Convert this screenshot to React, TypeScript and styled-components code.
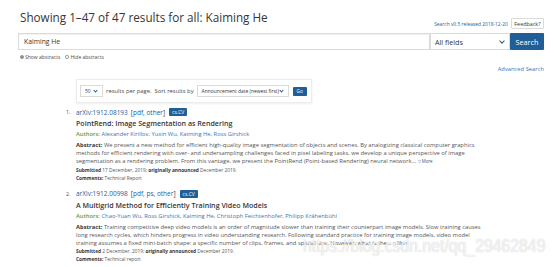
import React from "react"
import styled, { createGlobalStyle } from "styled-components"

const Global = createGlobalStyle`
  body {
    margin: 0;
    background: #fff;
    font-family: "Open Sans", "Liberation Sans", sans-serif;
    color: #363636;
  }
`

const Page = styled.div`
  position: relative;
  width: 554px;
  height: 267px;
  overflow: hidden;
  padding: 0 10px 0 18px;
  box-sizing: border-box;
`

const Header = styled.div`
  display: flex;
  justify-content: space-between;
  align-items: flex-end;
  height: 30px;
`

const Title = styled.h1`
  margin: 0 0 6px 2px;
  font-size: 11.7px;
  font-weight: 400;
  line-height: 14px;
  color: #363636;
  white-space: nowrap;
`

const Release = styled.div`
  display: flex;
  align-items: center;
  gap: 3px;
  margin-bottom: 1px;
  font-size: 4.9px;
  color: #1f5e96;
  white-space: nowrap;
`

const Feedback = styled.span`
  height: 11px;
  box-sizing: border-box;
  display: flex;
  align-items: center;
  border: 1px solid #dbdbdb;
  border-radius: 1px;
  padding: 0 2.5px;
  color: #363636;
  font-size: 5.4px;
`

const SearchRow = styled.div`
  display: flex;
  height: 17px;
  margin-top: 3px;
`

const Input = styled.div`
  flex: 1;
  border: 1px solid #dbdbdb;
  box-shadow: inset 0 1px 1px rgba(10, 10, 10, 0.06);
  display: flex;
  align-items: center;
  padding-left: 5px;
  font-size: 6.8px;
  color: #363636;
`

const Select = styled.div<{ $w: number; $size: number }>`
  width: ${(p) => p.$w}px;
  box-sizing: border-box;
  border: 1px solid #dbdbdb;
  display: flex;
  align-items: center;
  justify-content: space-between;
  padding: 0 3px 0 4px;
  font-size: ${(p) => p.$size}px;
  color: #363636;
  background: #fff;
  white-space: nowrap;
`

const Chevron = styled.span<{ $s: number }>`
  flex: none;
  width: ${(p) => p.$s}px;
  height: ${(p) => p.$s}px;
  border-right: 1px solid #1f5e96;
  border-bottom: 1px solid #1f5e96;
  transform: translateY(-1px) rotate(45deg);
  margin-right: 2px;
`

const Button = styled.div<{ $size: number; $w: number }>`
  background: #1f5e96;
  color: #fff;
  display: flex;
  align-items: center;
  justify-content: center;
  width: ${(p) => p.$w}px;
  font-size: ${(p) => p.$size}px;
  border-radius: 1px;
`

const Radios = styled.div`
  display: flex;
  gap: 5px;
  height: 6px;
  margin: 4px 0 0 2px;
  font-size: 5px;
  line-height: 6px;
  color: #4a4a4a;
  align-items: center;
`

const Radio = styled.span`
  display: inline-flex;
  align-items: center;
  gap: 1.5px;
`

const Dot = styled.span<{ $on?: boolean }>`
  width: 3.5px;
  height: 3.5px;
  box-sizing: border-box;
  border-radius: 50%;
  border: 0.6px solid #888;
  background: ${(p) => (p.$on ? "radial-gradient(#222 45%, #fff 55%)" : "#fff")};
`

const AdvRow = styled.div`
  display: flex;
  justify-content: flex-end;
  margin-top: 6px;
  font-size: 5.8px;
  line-height: 7px;
  color: #3f74b1;
`

const Paging = styled.div`
  margin: 6px 0 0 58px;
  width: 236px;
  height: 24px;
  box-sizing: border-box;
  border: 1px solid #ececec;
  box-shadow: 0 1px 2px rgba(10, 10, 10, 0.07);
  display: flex;
  align-items: center;
  gap: 3px;
  padding-left: 3px;
  font-size: 5.85px;
  color: #4a4a4a;
  white-space: nowrap;
`

const SmallSelect = styled(Select)`
  height: 12px;
`

const GoButton = styled(Button)`
  height: 9px;
  margin-left: 1px;
`

const Results = styled.ol`
  margin: 4px 0 0;
  padding: 0 0 0 58px;
  list-style: none;
  width: 408px;
`

const Item = styled.li`
  position: relative;
  margin-bottom: 7px;
`

const Num = styled.span`
  position: absolute;
  left: -10px;
  top: 0;
  font-size: 5.2px;
  line-height: 10px;
  color: #4a4a4a;
`

const Meta = styled.div`
  display: flex;
  align-items: center;
  gap: 3px;
  height: 10px;
  font-size: 6.5px;
  color: #363636;
  white-space: nowrap;
  a {
    color: #1f5e96;
  }
`

const Tag = styled.span`
  background: #1f5e96;
  color: #fff;
  font-size: 5px;
  line-height: 8px;
  padding: 0 3px;
  border-radius: 1px;
  margin-left: 1px;
`

const PaperTitle = styled.div`
  font-size: 7.1px;
  font-weight: 600;
  line-height: 12px;
  color: #363636;
  white-space: nowrap;
`

const Authors = styled.div`
  font-size: 5.8px;
  line-height: 10px;
  color: #3f74b1;
  white-space: nowrap;
  span {
    color: #5fa52c;
    font-weight: 600;
  }
`

const Abstract = styled.p`
  margin: 2px 0 0;
  font-size: 5.8px;
  line-height: 8.2px;
  color: #555;
  b {
    color: #363636;
    font-weight: 700;
  }
  a {
    color: #1f5e96;
    font-size: 4.4px;
  }
`

const Small = styled.div`
  font-size: 4.8px;
  line-height: 8px;
  color: #555;
  white-space: nowrap;
  b {
    color: #363636;
    font-weight: 700;
  }
`

const Watermark = styled.div`
  position: absolute;
  left: 303px;
  top: 234px;
  font-family: "Liberation Sans", Arial, sans-serif;
  font-size: 15.8px;
  line-height: 20px;
  color: rgba(255, 255, 255, 0.75);
  text-shadow: 0 0 1px rgba(140, 140, 140, 0.5);
  transform: scaleY(1.18);
  transform-origin: top left;
  white-space: nowrap;
`

const papers = [
  {
    id: "arXiv:1912.08193",
    links: ["pdf", "other"],
    title: "PointRend: Image Segmentation as Rendering",
    authors: "Alexander Kirillov, Yuxin Wu, Kaiming He, Ross Girshick",
    abstract:
      "We present a new method for efficient high-quality image segmentation of objects and scenes. By analogizing classical computer graphics methods for efficient rendering with over- and undersampling challenges faced in pixel labeling tasks, we develop a unique perspective of image segmentation as a rendering problem. From this vantage, we present the PointRend (Point-based Rendering) neural network…",
    submitted: "17 December, 2019",
    comments: "Technical Report"
  },
  {
    id: "arXiv:1912.00998",
    links: ["pdf", "ps", "other"],
    title: "A Multigrid Method for Efficiently Training Video Models",
    authors: "Chao-Yuan Wu, Ross Girshick, Kaiming He, Christoph Feichtenhofer, Philipp Krähenbühl",
    abstract:
      "Training competitive deep video models is an order of magnitude slower than training their counterpart image models. Slow training causes long research cycles, which hinders progress in video understanding research. Following standard practice for training image models, video model training assumes a fixed mini-batch shape: a specific number of clips, frames, and spatial size. However, what is the…",
    submitted: "2 December, 2019",
    comments: "Technical report"
  }
]

export default function App() {
  return (
    <>
      <Global />
      <Page>
        <Header>
          <Title>Showing 1–47 of 47 results for all: Kaiming He</Title>
          <Release>
            <span>Search v0.5 released 2018-12-20</span>
            <Feedback>Feedback?</Feedback>
          </Release>
        </Header>
        <SearchRow>
          <Input>Kaiming He</Input>
          <Select $w={80} $size={7.2}>
            All fields <Chevron $s={3} />
          </Select>
          <Button $size={7.3} $w={34}>
            Search
          </Button>
        </SearchRow>
        <Radios>
          <Radio>
            <Dot $on /> Show abstracts
          </Radio>
          <Radio>
            <Dot /> Hide abstracts
          </Radio>
        </Radios>
        <AdvRow>Advanced Search</AdvRow>
        <Paging>
          <SmallSelect $w={23} $size={4.9}>
            50 <Chevron $s={2} />
          </SmallSelect>
          <span>results per page.</span>
          <span>Sort results by</span>
          <SmallSelect $w={92} $size={4.9}>
            Announcement date (newest first) <Chevron $s={2} />
          </SmallSelect>
          <GoButton $size={4.6} $w={14}>
            Go
          </GoButton>
        </Paging>
        <Results>
          {papers.map((p, i) => (
            <Item key={p.id}>
              <Num>{i + 1}.</Num>
              <Meta>
                <a>{p.id}</a>
                <span>
                  [
                  {p.links.map((l, j) => (
                    <React.Fragment key={l}>
                      {j > 0 && ", "}
                      <a>{l}</a>
                    </React.Fragment>
                  ))}
                  ]
                </span>
                <Tag>cs.CV</Tag>
              </Meta>
              <PaperTitle>{p.title}</PaperTitle>
              <Authors>
                <span>Authors:</span> {p.authors}
              </Authors>
              <Abstract>
                <b>Abstract:</b> {p.abstract} <a>▽ More</a>
              </Abstract>
              <Small>
                <b>Submitted</b> {p.submitted}; <b>originally announced</b> December 2019.
              </Small>
              <Small>
                <b>Comments:</b> {p.comments}
              </Small>
            </Item>
          ))}
        </Results>
        <Watermark>https://blog.csdn.net/qq_29462849</Watermark>
      </Page>
    </>
  )
}
